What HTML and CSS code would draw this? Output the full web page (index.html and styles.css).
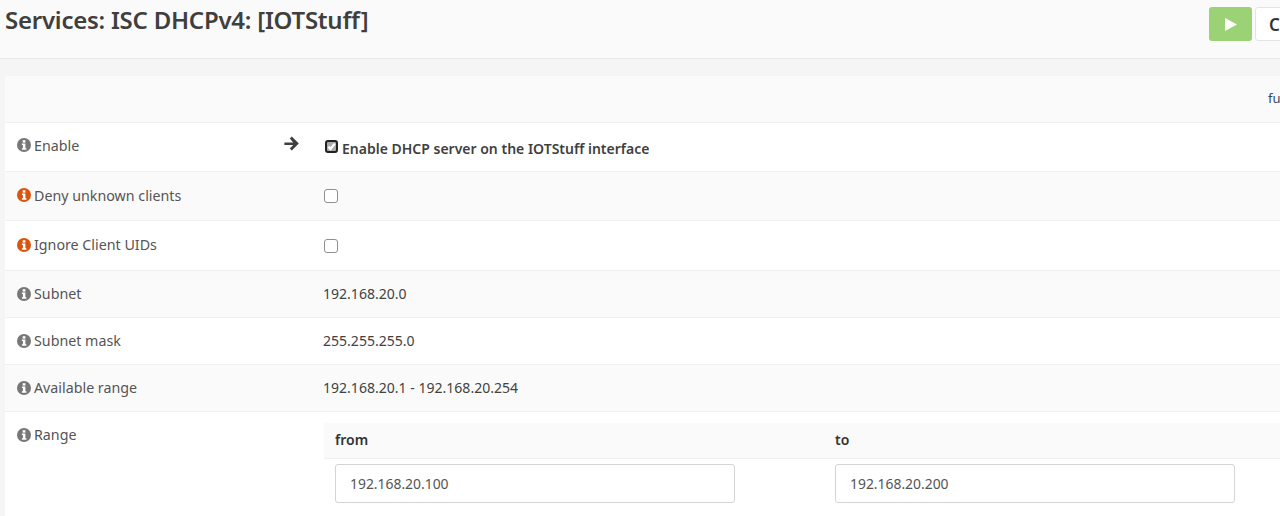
FILE: index.html
```html
<!DOCTYPE html>
<html lang="en">
<head>
<meta charset="utf-8">
<title>Services: ISC DHCPv4: [IOTStuff]</title>
<link rel="stylesheet" href="styles.css">
</head>
<body>
<svg class="defs" width="0" height="0" aria-hidden="true">
  <symbol id="info" viewBox="0 0 14 14">
    <circle cx="7" cy="7" r="7" fill="currentColor"/>
    <rect x="5.7" y="2.2" width="2.7" height="2.4" fill="#fff"/>
    <path d="M4.9 5.6h3.500v4.600h1v1.500H4.900v-1.500h1V7.100h-1z" fill="#fff"/>
  </symbol>
</svg>
<div class="page">
  <header class="topbar">
    <h1 class="title">Services: ISC DHCPv4: [IOTStuff]</h1>
    <div class="actions">
      <button class="btn-play" type="button" aria-label="Start">
        <svg width="12" height="13" viewBox="0 0 12 13"><path d="M0 0l12 6.500L0 13z" fill="#fff"/></svg>
      </button>
      <button class="btn-next" type="button">C</button>
    </div>
  </header>
  <main class="content">
    <div class="row row-head"><a class="help" href="#">full help</a></div>
    <div class="row row-white row-48">
      <div class="label label-top"><svg class="ico"><use href="#info"/></svg>Enable</div>
      <div class="arrow">
        <svg width="15" height="15" viewBox="0 0 15 15"><path d="M7.800 .4l7 7.100-7 7.100-2-2 3.400-3.500H.4V6.400h8.800L5.800 2.400z" fill="#3f3f3f"/></svg>
      </div>
      <div class="value value-checked">
        <span class="check check-on">
          <svg viewBox="0 0 10 10"><path d="M1.500 5.200l2.400 2.500L8.600 1.800" fill="none" stroke="#fff" stroke-width="2.600"/></svg>
        </span>
        <strong class="check-text">Enable DHCP server on the IOTStuff interface</strong>
      </div>
    </div>
    <div class="row row-grey row-48">
      <div class="label label-up"><svg class="ico ico-warn"><use href="#info"/></svg>Deny unknown clients</div>
      <div class="value"><span class="check"></span></div>
    </div>
    <div class="row row-white row-49">
      <div class="label label-up"><svg class="ico ico-warn"><use href="#info"/></svg>Ignore Client UIDs</div>
      <div class="value"><span class="check check-low"></span></div>
    </div>
    <div class="row row-grey row-46">
      <div class="label"><svg class="ico"><use href="#info"/></svg>Subnet</div>
      <div class="value">192.168.20.0</div>
    </div>
    <div class="row row-white row-46">
      <div class="label"><svg class="ico"><use href="#info"/></svg>Subnet mask</div>
      <div class="value">255.255.255.0</div>
    </div>
    <div class="row row-grey row-46">
      <div class="label"><svg class="ico"><use href="#info"/></svg>Available range</div>
      <div class="value">192.168.20.1 - 192.168.20.254</div>
    </div>
    <div class="row row-white row-range">
      <div class="label label-range"><svg class="ico"><use href="#info"/></svg>Range</div>
      <div class="range">
        <div class="range-head"><span class="range-title">from</span><span class="range-title">to</span></div>
        <div class="range-body">
          <div class="range-cell"><input class="field" type="text" value="192.168.20.100"></div>
          <div class="range-cell"><input class="field" type="text" value="192.168.20.200"></div>
        </div>
      </div>
    </div>
  </main>
</div>
</body>
</html>
```
FILE: styles.css
```css
* { box-sizing: border-box; }
html, body { margin: 0; height: 516px; overflow: hidden; }
body { background: #f5f5f5; font-family: "Noto Sans", "Liberation Sans", sans-serif; color: #424242; }
.defs { position: absolute; }
.page { width: 1280px; height: 516px; overflow: hidden; }

.topbar { height: 59px; background: #fafafa; border-bottom: 1px solid #e8e8e8; display: flex; justify-content: space-between; padding: 6px 0 0 5px; }
.title { margin: 0; font-size: 24px; line-height: 28px; font-weight: 600; color: #3f3f3f; white-space: nowrap; letter-spacing: -0.24px; }
.actions { display: flex; gap: 3px; flex: none; width: 71px; height: 34px; margin-top: 1px; }
.btn-play { width: 43px; height: 34px; flex: none; background: #9bd275; border: 0; border-radius: 3px; padding: 0; display: flex; align-items: center; justify-content: center; }
.btn-next { width: 43px; height: 34px; flex: none; background: #fff; border: 1px solid #e4e4e4; border-radius: 3px; font: 600 17px "Noto Sans", sans-serif; color: #333; padding: 0 0 0 13px; text-align: left; }

.content { margin: 17px 0 0 5px; width: 1275px; }
.row { display: flex; border-bottom: 1px solid #f0f0f0; font-size: 14.05px; align-items: center; position: relative; overflow: hidden; }
.row-head { height: 47px; background: #fafafa; justify-content: flex-end; padding-bottom: 2px; }
.row-white { background: #fff; }
.row-grey { background: #fafafa; }
.row-48 { height: 49px; }
.row-49 { height: 50px; }
.row-46 { height: 47px; padding-bottom: 1px; }
.row-range { height: 110px; align-items: flex-start; border-bottom: 0; }
.help { color: #31466f; text-decoration: none; font-size: 13px; width: 12px; overflow: hidden; white-space: nowrap; }
.label { width: 318px; flex: none; padding-left: 12px; display: flex; align-items: center; gap: 3px; color: #555; font-size: 14.25px; }
.label-up { margin-top: -2px; }
.label-top { margin-top: -4px; }
.label-range { margin-top: 13px; }
.ico { width: 14px; height: 14px; flex: none; color: #777; }
.ico-warn { color: #d9550f; }
.value { color: #424242; display: flex; align-items: center; }
.arrow { position: absolute; left: 279px; top: 13px; line-height: 0; }
.value-checked { padding: 2px 0 0 2px; }
.check { width: 14px; height: 14px; border: 1px solid #8f8f8f; border-radius: 3px; background: #fff; display: block; flex: none; margin: -1px 0 0 1px; }
.check-low { margin-top: 0; }
.check-on { margin: -4px 4px 0 0; width: 13px; height: 13px; border: 2px solid #222; background: #aaa; border-radius: 3px; line-height: 0; overflow: hidden; }
.check-on svg { display: block; width: 9px; height: 9px; }
.check-text { font-weight: 600; color: #3f3f3f; font-size: 14px; }
.range { width: 956px; margin: 11px 0 0 1px; }
.range-head { height: 36px; background: #fafafa; border-bottom: 1px solid #f0f0f0; display: grid; grid-template-columns: 500px 1fr; align-items: center; padding: 0 0 2px 11px; }
.range-title { font-weight: 600; color: #333; font-size: 14px; }
.range-body { display: grid; grid-template-columns: 500px 400px; padding: 5px 0 0 11px; }
.field { width: 400px; height: 39px; border: 1px solid #d4d4d4; border-radius: 3px; background: #fff; padding: 0 14px; font: 13.9px "Noto Sans", sans-serif; color: #555; outline: 0; }
```
